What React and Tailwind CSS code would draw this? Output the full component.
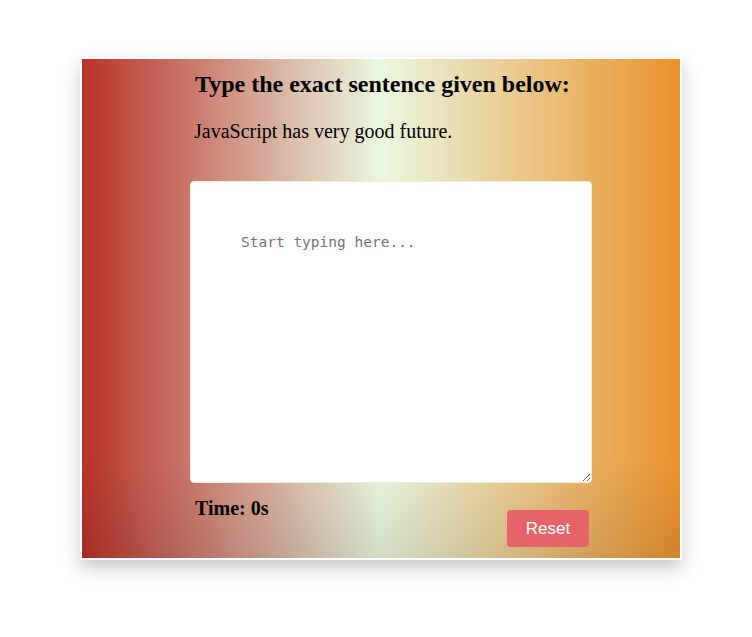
import React, { useState } from "react";

const App = () => {
	const [text, setText] = useState("");
	const [time, setTime] = useState(0);

	return (
		<div className="min-h-screen bg-white pt-[57px] pl-[80px]">
			<div className="w-[602px] h-[503px] border-2 border-white shadow-[0_8px_18px_rgba(0,0,0,0.22)] bg-[linear-gradient(to_bottom,transparent_80%,rgba(0,0,0,0.1)),linear-gradient(to_right,#b83228,#eaf7e0_50%,#ea922c)]">
				<div className="ml-[108px] w-[402px] font-['Liberation_Serif',serif] text-black">
					<h2 className="pl-[5px] pt-[11px] text-[24px] font-bold leading-[28px]">
						Type the exact sentence given below:
					</h2>
					<p className="pl-[4px] mt-[22px] text-[20px] leading-[22px]">
						JavaScript has very good future.
					</p>
					{/* Typing area */}
					<textarea
						value={text}
						onChange={(e) => setText(e.target.value)}
						placeholder="Start typing here..."
						className="block mt-[39px] w-[402px] h-[302px] bg-white border border-[#e6f2dc] rounded-[4px] pl-[50px] pr-[20px] pt-[50px] font-['DejaVu_Sans_Mono',monospace] text-[14.5px] leading-[20px] text-black placeholder:text-[#757575] outline-none"
					/>
					<div className="flex justify-between items-start">
						<div className="pl-[5px] mt-[13px] text-[20px] font-bold leading-[24px]">
							Time: {time}s
						</div>
						<button
							onClick={() => {
								setText("");
								setTime(0);
							}}
							className="mt-[27px] mr-[3px] w-[82px] h-[37px] rounded-[4px] bg-[#e5646a] text-white text-[17px] font-['Liberation_Sans',sans-serif]"
						>
							Reset
						</button>
					</div>
				</div>
			</div>
		</div>
	);
};

export default App;
